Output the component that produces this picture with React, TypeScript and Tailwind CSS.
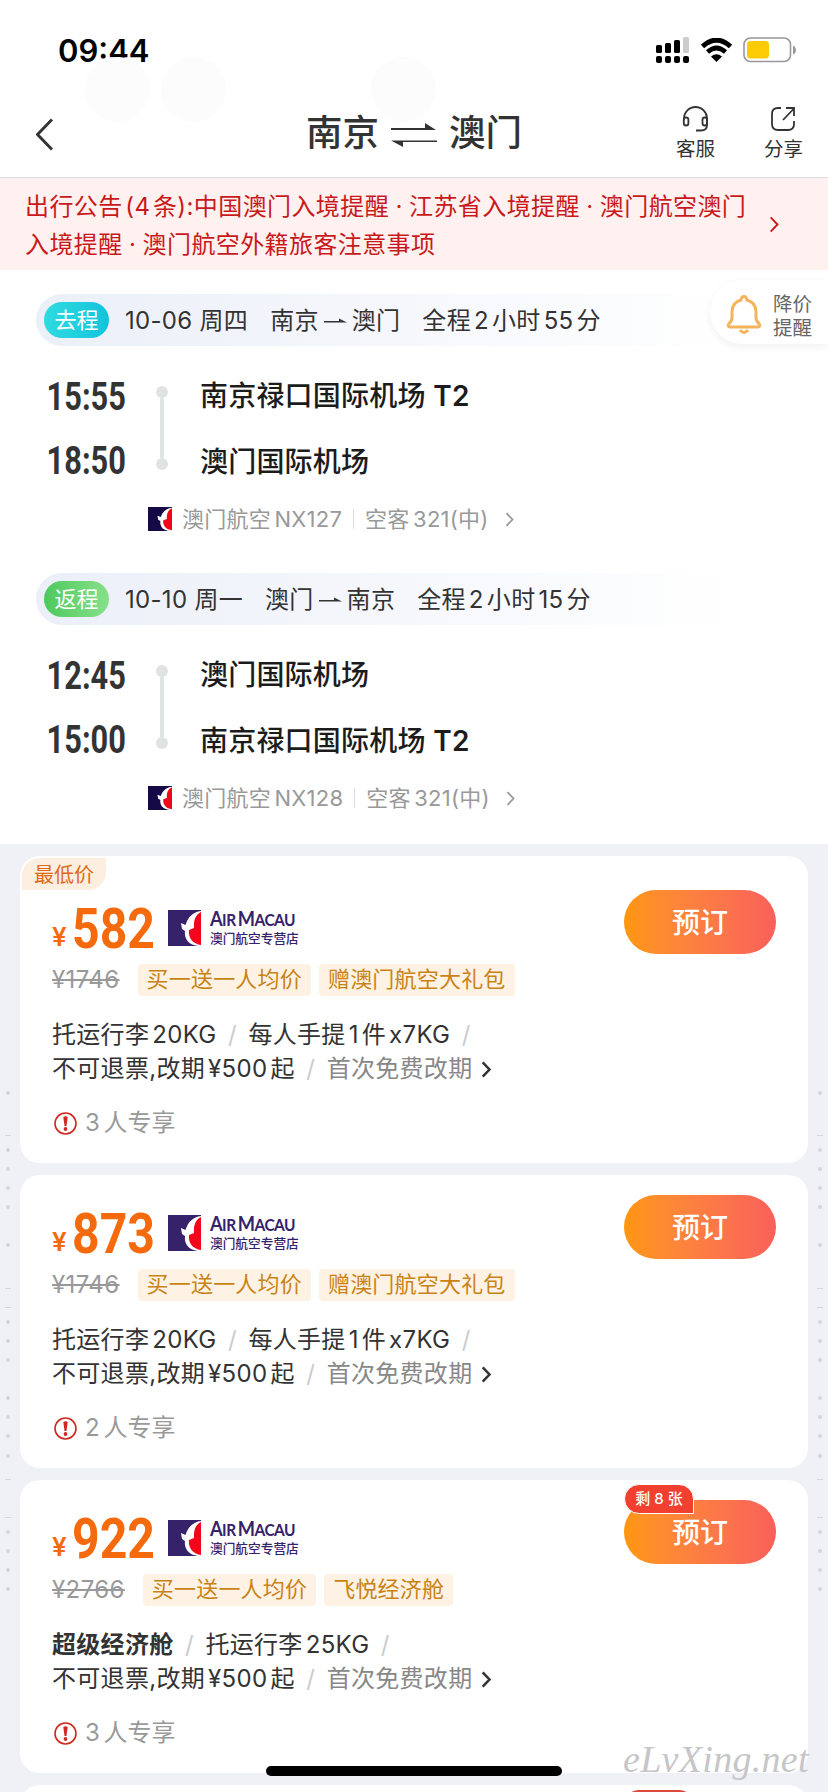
import React from 'react';

const Chevron: React.FC<{ className: string; size: number; width?: number }> = ({ className, size, width = 2 }) => (
  <svg className={className} width={size * 0.6} height={size} viewBox="0 0 12 20" fill="none" stroke="currentColor" strokeWidth={width}>
    <path d="M2 1.5 10 10 2 18.5" />
  </svg>
);

const AirlineMark: React.FC<{ className: string; bg: string }> = ({ className, bg }) => (
  <svg className={className} viewBox="0 0 33 36" preserveAspectRatio="none">
    <rect width="33" height="36" fill={bg} />
    <path d="M33 1C25 2 20 7 17.5 15L13 13 14 19 17 21C16 28 20 35 30 36H33Z" fill="#fff" />
    <path d="M33 2C27 5 25.500 11 26 18L21 20C20 28 25 34 33 35Z" fill="#f3051b" />
  </svg>
);

const RouteArrow: React.FC = () => (
  <svg className="mx-[5px] shrink-0" width="23" height="8" viewBox="0 0 23 8">
    <path d="M0 5.500H23L15 1.500V4H0Z" fill="#333" />
  </svg>
);

const trips = [
  {
    label: '去程',
    tag: 'from-[#2edbe0] to-[#12c3dc]',
    date: '10-06 周四',
    from: '南京',
    to: '澳门',
    duration: '全程 2 小时 55 分',
    stops: [
      { time: '15:55', place: '南京禄口国际机场', terminal: 'T2' },
      { time: '18:50', place: '澳门国际机场', terminal: '' }
    ],
    flight: 'NX127'
  },
  {
    label: '返程',
    tag: 'from-[#4cc95c] to-[#86e08a]',
    date: '10-10 周一',
    from: '澳门',
    to: '南京',
    duration: '全程 2 小时 15 分',
    stops: [
      { time: '12:45', place: '澳门国际机场', terminal: '' },
      { time: '15:00', place: '南京禄口国际机场', terminal: 'T2' }
    ],
    flight: 'NX128'
  }
];

const fares = [
  { price: '582', original: '¥1746', tags: ['买一送一人均价', '赠澳门航空大礼包'], details: ['托运行李 20KG', '每人手提 1 件 x7KG'], people: 3, lowest: true, left: '' },
  { price: '873', original: '¥1746', tags: ['买一送一人均价', '赠澳门航空大礼包'], details: ['托运行李 20KG', '每人手提 1 件 x7KG'], people: 2, lowest: false, left: '' },
  { price: '922', original: '¥2766', tags: ['买一送一人均价', '飞悦经济舱'], details: ['超级经济舱', '托运行李 25KG'], people: 3, lowest: false, left: '剩 8 张' }
];

const StatusBar: React.FC = () => (
  <div className="flex h-[100px] items-center justify-between pl-[58px] pr-[31px]">
    <span className="text-[31px] font-semibold leading-none text-black">09:44</span>
    <div className="flex items-center">
      <svg width="34" height="26" viewBox="0 0 34 26">
        {[0, 9, 18, 27].map((x) => (
          <rect key={x} x={x} y="19" width="6" height="7" rx="2" />
        ))}
        <rect x="0" y="8" width="6" height="8" rx="1.5" />
        <rect x="9" y="6" width="6" height="10" rx="1.5" />
        <rect x="18" y="3" width="6" height="13" rx="1.5" />
        <rect x="27" y="0" width="6" height="16" rx="1.5" fill="#ccc" />
      </svg>
      <svg className="ml-[10px]" width="33" height="24" viewBox="0 0 33 24">
        <path d="M2.5 8.500Q16.500-4 30.500 8.500" fill="none" stroke="#000" strokeWidth="5" />
        <path d="M7.500 14Q16.500 6 25.500 14" fill="none" stroke="#000" strokeWidth="4.600" />
        <path d="M11 18.500Q16.500 14 22 18.500L16.500 24Z" />
      </svg>
      <svg className="ml-[10px]" width="54" height="26" viewBox="0 0 54 26">
        <rect x="1" y="1" width="46.500" height="23.500" rx="6.500" fill="none" stroke="#999" strokeWidth="1.600" />
        <rect x="4" y="4" width="22" height="17.500" rx="3.500" fill="#fccb05" />
        <path d="M50 8.500Q53 10 53 13T50 17.500Z" fill="#999" />
      </svg>
    </div>
  </div>
);

const Header: React.FC = () => (
  <div className="relative flex h-[77px] items-start">
    <svg className="ml-[35px] mt-[18px]" width="18" height="33" viewBox="0 0 18 33" fill="none" stroke="#333" strokeWidth="3">
      <path d="M17 1.500 2.500 16.500 17 31.500" strokeLinejoin="round" />
    </svg>
    <div className="ml-[253px] mt-[11px] flex items-center text-[36.5px] font-medium leading-[44px] text-[#333]">
      <span>南京</span>
      <svg className="mx-[12px] mt-1" width="46" height="28" viewBox="0 0 46 28">
        <path d="M0 7H34V2L45 9H0ZM46 21H12V26L0 19.500H46Z" fill="#333" />
      </svg>
      <span>澳门</span>
    </div>
    <div className="ml-auto flex gap-[49px] pr-[25px] text-[19.5px] leading-[24px] text-[#333]">
      <div className="flex flex-col items-center">
        <svg className="mt-[6px]" width="27" height="26" viewBox="0 0 27 26" fill="none" stroke="#333" strokeWidth="1.800">
          <path d="M2 14V12.500A11.500 11.500 0 0 1 25 12.500V19Q25 24.500 19 24.500H14" />
          <rect x="1.800" y="11.500" width="4.600" height="8" rx="2.300" />
          <rect x="20.500" y="11.500" width="4.600" height="8" rx="2.300" />
        </svg>
        <span className="mt-[5px]">客服</span>
      </div>
      <div className="flex flex-col items-center">
        <svg className="mt-[6px]" width="26" height="26" viewBox="0 0 26 26" fill="none" stroke="#333" strokeWidth="1.800">
          <path d="M11 2H8Q2 2 2 8V18Q2 24 8 24H18Q24 24 24 18V15M13 14 24 2.500M16 2H24V10" />
        </svg>
        <span className="mt-[5px]">分享</span>
      </div>
    </div>
  </div>
);

const Notice: React.FC = () => (
  <div className="flex h-[93px] items-center border-t border-[#d9dddd] bg-[#fff1ef] pl-[25px] text-[#c9191c]">
    <p className="w-[735px] whitespace-nowrap pt-1 text-[24px] leading-[38px] tracking-[0.4px] [word-spacing:-0.8px]">
      <span className="[word-spacing:-4.5px]">出行公告 (4 条):</span>中国澳门入境提醒 · 江苏省入境提醒 · 澳门航空澳门
      <br />
      入境提醒 · 澳门航空外籍旅客注意事项
    </p>
    <Chevron className="ml-[9px]" size={17} width={2.2} />
  </div>
);

const Trip: React.FC<{ trip: (typeof trips)[number] }> = ({ trip }) => (
  <div className="h-[279px]">
    <div className="ml-9 flex h-[52px] w-[700px] items-center rounded-l-full bg-gradient-to-r from-[#ebeff8] to-white pl-2 text-[24px] text-[#333]">
      <span className={`flex h-9 w-[65px] items-center justify-center rounded-full bg-gradient-to-r text-[22px] text-white ${trip.tag}`}>{trip.label}</span>
      <div className="ml-4 flex items-center gap-[22px] whitespace-nowrap pt-[2px] tracking-[0.3px]">
        <span>{trip.date}</span>
        <span className="flex items-center">
          {trip.from}
          <RouteArrow />
          {trip.to}
        </span>
        <span className="[word-spacing:-4px]">{trip.duration}</span>
      </div>
    </div>
    <div className="mt-[17px] flex">
      <div className="mt-[2px] flex h-[128px] w-[126px] flex-col items-end text-[#333]">
        {trip.stops.map((stop) => (
          <span key={stop.time} className="h-[64px] origin-right scale-x-[0.81] font-[Roboto] text-[38px] font-bold leading-[64px]">
            {stop.time}
          </span>
        ))}
      </div>
      <div className="ml-[30px] mt-[23px] flex flex-col items-center text-[#dfe3e4]">
        <i className="h-3 w-3 rounded-full bg-current" />
        <i className="h-[60px] w-1 bg-current" />
        <i className="h-3 w-3 rounded-full bg-current" />
      </div>
      <div className="ml-[32px] whitespace-nowrap text-[28px] font-medium leading-[66px] tracking-[0.2px] text-[#1c1c1c]">
        {trip.stops.map((stop) => (
          <div key={stop.place}>
            {stop.place} <span className="font-semibold">{stop.terminal}</span>
          </div>
        ))}
      </div>
    </div>
    <div className="ml-[148px] mt-[9px] flex h-[30px] items-center whitespace-nowrap text-[22px] tracking-[0.25px] text-[#999] [word-spacing:-3px]">
      <AirlineMark className="h-6 w-6" bg="#150a45" />
      <span className="ml-[10px]">澳门航空 {trip.flight}</span>
      <i className="mx-[11px] h-5 w-px bg-[#ddd]" />
      <span>空客 321(中)</span>
      <Chevron className="ml-[16px]" size={15} width={2.4} />
    </div>
  </div>
);

const Slash: React.FC = () => <span className="mx-[11.5px] text-[#ccc]">/</span>;

const FareCard: React.FC<{ fare: (typeof fares)[number] }> = ({ fare }) => (
  <div className={`relative w-[788px] shrink-0 rounded-[20px] bg-white pl-[32px] pr-8 ${fare.lowest ? 'h-[307px] pt-[34px]' : 'h-[293px] pt-5'}`}>
    {fare.lowest && (
      <span className="absolute left-[2px] top-[2px] flex h-8 w-[84px] items-center justify-center rounded-br-[18px] rounded-tl-[18px] bg-[#fcefdf] pt-[2px] text-[20px] text-[#de6a16]">
        最低价
      </span>
    )}
    <div className="flex h-[64px] justify-between">
      <div className="flex">
        <span className="mt-[31px] w-[20px] text-[26px] font-semibold leading-[32px] text-[#f56a0c]">¥</span>
        <span className="w-[84px] origin-left scale-x-[0.86] whitespace-nowrap pt-[11px] font-[Roboto] text-[56px] font-bold leading-[56px] text-[#f56a0c]">{fare.price}</span>
        <AirlineMark className="ml-[12px] mt-5 h-9 w-[33px]" bg="#35226b" />
        <div className="ml-[9px] mt-[18px] whitespace-nowrap text-[#35226b]">
          <div className="origin-left scale-x-[0.91] font-[Lato] text-[17px] font-bold leading-[20px] tracking-[-0.6px] [word-spacing:-1px]">
            <span className="text-[20px]">A</span>IR <span className="text-[20px]">M</span>ACAU
          </div>
          <div className="text-[12.7px] font-medium leading-[18px]">澳门航空专营店</div>
        </div>
      </div>
      <button className="relative h-16 w-[152px] rounded-full bg-gradient-to-r from-[#ff970b] to-[#f9605a] pt-[2px] text-[28px] font-medium text-white">
        预订
        {fare.left && (
          <span className="absolute left-0 top-[-16px] flex h-[30px] w-[70px] items-center justify-center rounded-full rounded-br-none border border-white bg-[#f1402f] text-[15px] font-medium">
            {fare.left}
          </span>
        )}
      </button>
    </div>
    <div className="mt-[10px] flex h-8 items-center whitespace-nowrap text-[22px]">
      <span className="mr-[18px] text-[24px] tracking-[0.4px] text-[#999] line-through">{fare.original}</span>
      {fare.tags.map((tag) => (
        <span key={tag} className="mr-2 h-8 rounded bg-[#fef2e4] px-[9px] leading-[31px] tracking-[0.2px] text-[#c98314]">
          {tag}
        </span>
      ))}
    </div>
    <div className="mt-[22px] whitespace-nowrap text-[24px] leading-[34px] tracking-[0.3px] text-[#333] [word-spacing:-4px]">
      <div>
        {fare.details.map((item) => (
          <React.Fragment key={item}>
            <span className={item === '超级经济舱' ? 'font-bold' : ''}>{item}</span>
            <Slash />
          </React.Fragment>
        ))}
      </div>
      <div className="flex items-center">
        不可退票,改期 ¥500 起
        <Slash />
        <span className="text-[#888]">首次免费改期</span>
        <Chevron className="ml-[9px]" size={17} width={3} />
      </div>
    </div>
    <div className="mt-[20px] flex h-[34px] items-center text-[24px] text-[#999] [word-spacing:-3px]">
      <svg className="ml-[2px] mr-[8px]" width="23" height="23" viewBox="0 0 23 23">
        <circle cx="11.500" cy="11.500" r="10.500" fill="none" stroke="#cf2a20" strokeWidth="1.600" />
        <path d="M9.300 5Q11.500 3.500 13.700 5L12.500 14H10.500Z" fill="#cf2a20" />
        <circle cx="11.500" cy="17" r="1.900" fill="#cf2a20" />
      </svg>
      {fare.people} 人专享
    </div>
  </div>
);

// faint marks running down both page edges, one slot every 19px
const edgeDots = [13, 70, 89, 108, 127, 165, 242, 261, 280, 318, 337, 356, 376, 452, 471, 490, 509];
const edgeDashes = [55, 208, 227, 399, 437];

const EdgeMarks: React.FC<{ className: string }> = ({ className }) => (
  <svg className={className} width="8" height="520" viewBox="0 0 8 520" fill="#d5d6da">
    {edgeDots.map((y) => (
      <circle key={y} cx="4" cy={y} r="2" />
    ))}
    {edgeDashes.map((y) => (
      <rect key={y} x="1" y={y} width="6" height="1" />
    ))}
  </svg>
);

const App: React.FC = () => (
  <div className="relative h-[1792px] w-[828px] overflow-hidden bg-white font-[Inter,'Noto_Sans_CJK_SC',sans-serif]">
    <i className="absolute left-[85px] top-[57px] h-[65px] w-[65px] rounded-full bg-[#fcfcfc]" />
    <i className="absolute left-[161px] top-[57px] h-[65px] w-[65px] rounded-full bg-[#fcfcfc]" />
    <i className="absolute left-[371px] top-[57px] h-[65px] w-[65px] rounded-full bg-[#fcfcfc]" />
    <StatusBar />
    <Header />
    <Notice />
    <div className="h-[574px] pt-6">
      {trips.map((trip) => (
        <Trip key={trip.label} trip={trip} />
      ))}
    </div>
    <div className="flex h-[948px] flex-col items-center gap-3 bg-[#eff1f6] pt-3">
      {fares.map((fare) => (
        <FareCard key={fare.price} fare={fare} />
      ))}
      <div className="h-10 w-[788px] shrink-0 rounded-t-[20px] bg-white">
        <div className="ml-[604px] mt-[5px] h-[30px] w-[70px] rounded-full rounded-br-none bg-[#dc4a3c]" />
      </div>
    </div>
    <EdgeMarks className="absolute left-[4px] top-[1080px]" />
    <EdgeMarks className="absolute right-[4px] top-[1080px]" />
    <div className="absolute right-0 top-[280px] flex h-16 w-[118px] items-center rounded-l-full bg-white pl-4 pt-[3px] text-[19.5px] leading-6 text-[#666] shadow-[0_3px_8px_rgba(0,0,0,0.06)]">
      <svg className="mr-[11px]" width="36" height="40" viewBox="0 0 36 40" fill="none" stroke="#f3b45d" strokeWidth="3">
        <path d="M18 2.500Q20.500 2.500 21 6 30 8.500 30 18V24Q30 27 33 29.500 35 32.500 32 33H4Q1 32.500 3 29.500 6 27 6 24V18Q6 8.500 15 6 15.500 2.500 18 2.500ZM14 36Q18 41 22 36" />
      </svg>
      <span className="pt-1">
        降价
        <br />
        提醒
      </span>
    </div>
    <div className="absolute left-[266px] top-[1766px] h-[10px] w-[296px] rounded-full bg-black" />
    <span className="absolute left-[623px] top-[1737px] whitespace-nowrap font-['Liberation_Serif'] text-[38px] italic leading-[44px] tracking-[0.3px] text-[#c6c6c8]">eLvXing.net</span>
  </div>
);

export default App;
